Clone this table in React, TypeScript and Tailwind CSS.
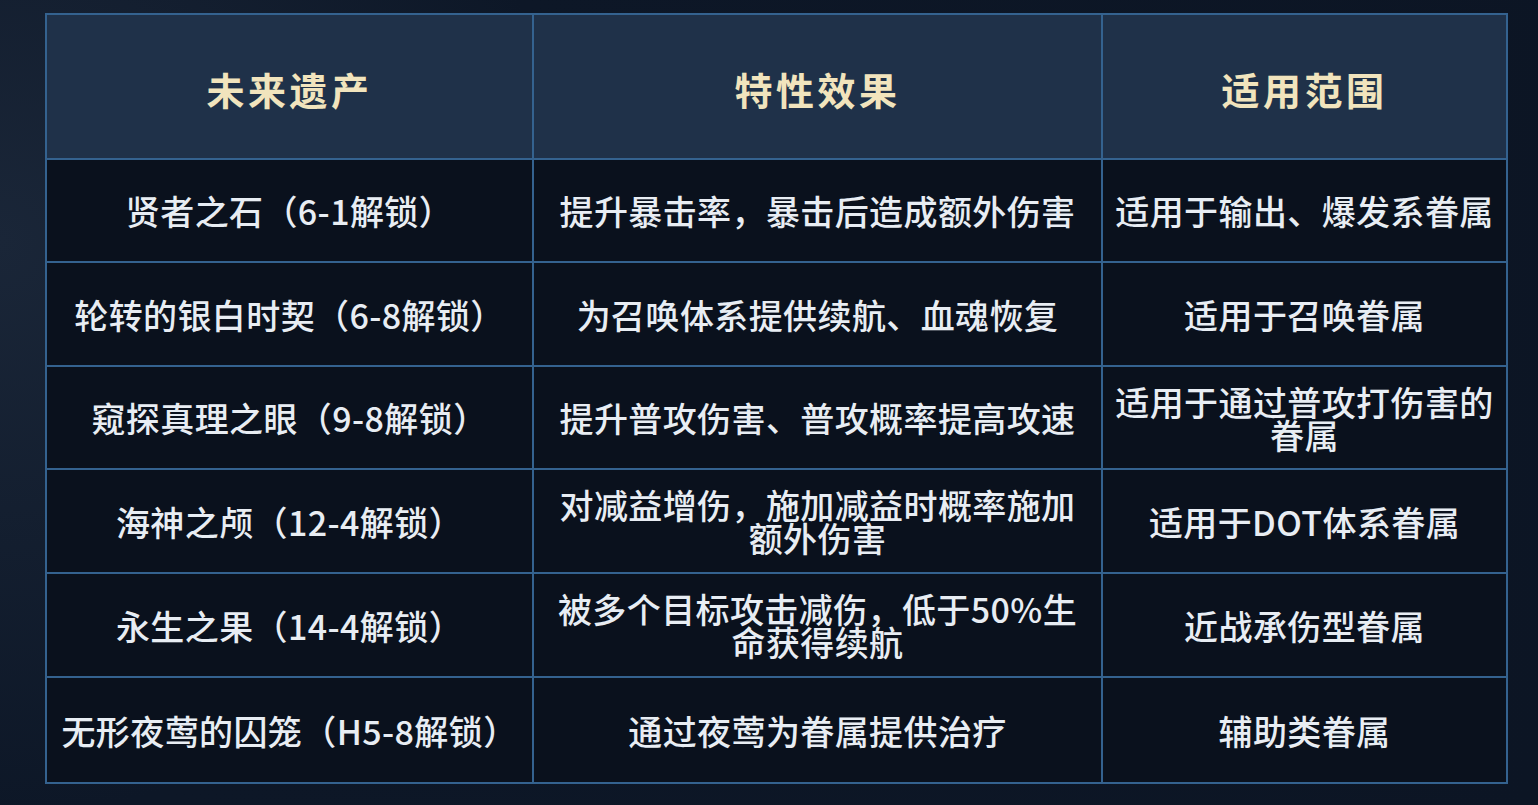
import React from 'react';

type Row = { relic: string; effect: string; scope: string; h: string };

const rows: Row[] = [
  { relic: '贤者之石（6-1解锁）', effect: '提升暴击率，暴击后造成额外伤害', scope: '适用于输出、爆发系眷属', h: 'h-[103px]' },
  { relic: '轮转的银白时契（6-8解锁）', effect: '为召唤体系提供续航、血魂恢复', scope: '适用于召唤眷属', h: 'h-[104px]' },
  { relic: '窥探真理之眼（9-8解锁）', effect: '提升普攻伤害、普攻概率提高攻速', scope: '适用于通过普攻打伤害的眷属', h: 'h-[103px]' },
  { relic: '海神之颅（12-4解锁）', effect: '对减益增伤，施加减益时概率施加额外伤害', scope: '适用于DOT体系眷属', h: 'h-[104px]' },
  { relic: '永生之果（14-4解锁）', effect: '被多个目标攻击减伤，低于50%生命获得续航', scope: '近战承伤型眷属', h: 'h-[104px]' },
  { relic: '无形夜莺的囚笼（H5-8解锁）', effect: '通过夜莺为眷属提供治疗', scope: '辅助类眷属', h: 'h-[106px]' },
];

const headers = ['未来遗产', '特性效果', '适用范围'];

export default function App() {
  return (
    <div
      className="w-[1538px] h-[805px] overflow-hidden bg-[#0d1727] bg-[radial-gradient(circle_at_0%_30%,#1a2638_0%,#0d1727_35%,#0c1524_100%)] pt-[13px] pl-[45px]"
      style={{ fontFamily: '"Noto Sans CJK SC", "Noto Sans", sans-serif' }}
    >
      <table className="table-fixed border-collapse w-[1461px]">
        <colgroup>
          <col className="w-[487px]" />
          <col className="w-[569px]" />
          <col className="w-[405px]" />
        </colgroup>
        <thead>
          <tr className="h-[145px] bg-[#1f3149]">
            {headers.map((h) => (
              <th
                key={h}
                className="border-[2px] border-[#34628f] pt-[4px] text-center align-middle text-[38px] font-bold tracking-[3.5px] text-[#f1e4bd]"
              >
                {h}
              </th>
            ))}
          </tr>
        </thead>
        <tbody>
          {rows.map((r, i) => (
            <tr key={i} className={`${r.h} bg-[#0a111d]`}>
              {[r.relic, r.effect, r.scope].map((t, j) => (
                <td
                  key={j}
                  className="border-[2px] border-[#34628f] px-[10px] text-center align-middle text-[34px] font-medium leading-[33px] tracking-[0.4px] text-[#e8edf3]"
                >
                  {t}
                </td>
              ))}
            </tr>
          ))}
        </tbody>
      </table>
    </div>
  );
}
